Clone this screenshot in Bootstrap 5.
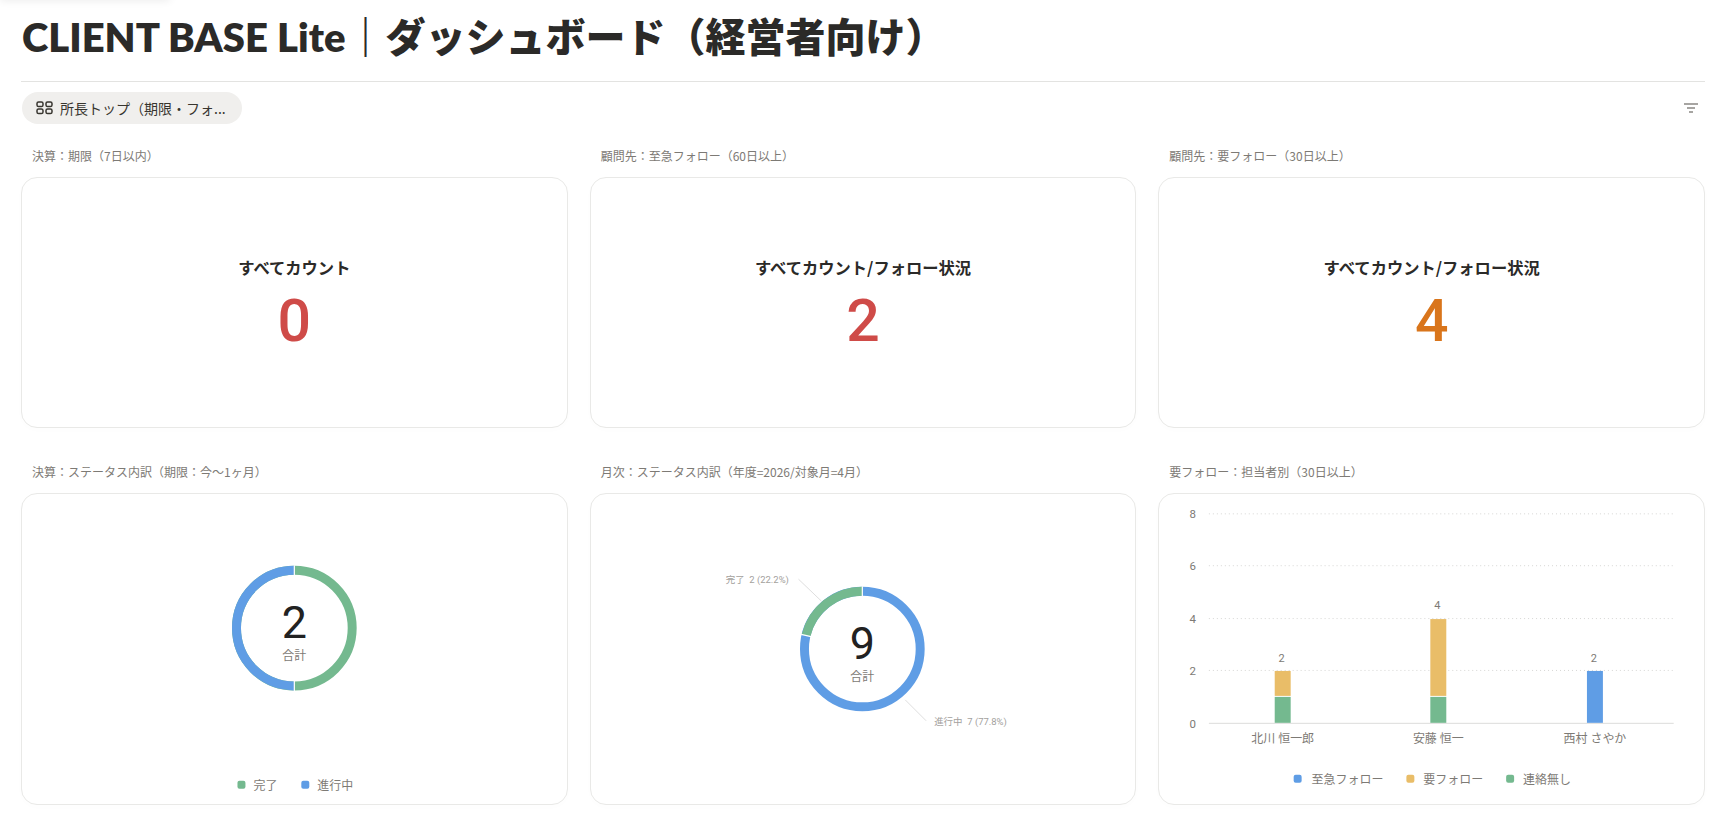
<!DOCTYPE html>
<html lang="ja">
<head>
<meta charset="utf-8">
<title>CLIENT BASE Lite</title>
<link href="https://cdn.jsdelivr.net/npm/bootstrap@5.3.0/dist/css/bootstrap.min.css" rel="stylesheet">
<style>
html,body{height:100%;overflow:hidden}
body{background:#fff;color:#2b2a28;font-family:"Noto Sans CJK JP","Noto Sans",sans-serif}
.page-wrap{padding:0 25px 0 21px;height:815px}
.page-title{font-family:"Lato","Noto Sans CJK JP",sans-serif;font-size:40px;font-weight:800;line-height:1;margin:0;padding:17px 0 0 1px;color:#2b2a28;border-bottom:1px solid #e3e3e1;height:82px}
.view-bar{height:58px;padding:10px 0 0}
.view-pill{height:32px;width:220px;margin-left:1px;padding:0 12px 0 14px;background:#f0efed;border-radius:16px;font-size:14px;color:#37352f;gap:7px}
.sort-icon{margin:11px 7px 0 0}
.sec-label{font-size:12px;color:#7d7a75;padding-left:11px;height:29px;line-height:16px;margin-top:8px}
.grid-row{--bs-gutter-x:22px;--bs-gutter-y:0;margin-left:0;margin-right:0}
.grid-cell{padding:0;width:calc((100% - 44px)/3);flex:0 0 auto}
.tile{border:1px solid #e9e9e7;border-radius:16px;background:#fff;box-shadow:0 2px 8px rgba(0,0,0,.012);height:251px}
.tile-metric{padding-top:3px}
.tile-tall{height:312px}
.tile-name{font-size:16.300px;font-weight:700;color:#2b2a28;line-height:24px}
.tile-num{font-family:"Roboto",sans-serif;font-size:59px;font-weight:500;line-height:64px;margin-top:10px}
.c-red{color:#cf4b48}
.c-org{color:#d9751b}
.chart-svg{display:block;width:100%;height:100%}
.chart-svg text{font-family:"Roboto","Noto Sans CJK JP",sans-serif}
.row-gap{margin-top:28px}
.top-fade{position:absolute;left:0;top:-6px;width:170px;height:6px;box-shadow:0 0 8px rgba(0,0,0,.1)}
</style>
</head>
<body>
<div class="top-fade"></div>
<div class="page-wrap">
  <h1 class="page-title">CLIENT BASE Lite｜ダッシュボード（経営者向け）</h1>
  <div class="view-bar d-flex justify-content-between align-items-start">
    <div class="view-pill d-flex align-items-center">
      <svg width="17" height="14" viewBox="0 0 17 14" fill="none" stroke="#37352f" stroke-width="1.5"><rect x="1" y="1" width="6" height="4.500" rx="1.600"/><rect x="10" y="1" width="6" height="4.500" rx="1.600"/><rect x="1" y="8" width="6" height="4.500" rx="1.600"/><rect x="10" y="8" width="6" height="4.500" rx="1.600"/></svg>
      <span class="text-nowrap">所長トップ（期限・フォ...</span>
    </div>
    <svg class="sort-icon" width="14" height="10" viewBox="0 0 14 10" stroke="#8a8884" stroke-width="1.300"><path d="M0 1h14M3 5h8M5 9h4"/></svg>
  </div>

  <div class="row grid-row flex-nowrap justify-content-between">
    <div class="grid-cell">
      <div class="sec-label">決算：期限（7日以内）</div>
      <div class="card tile tile-metric d-flex flex-column align-items-center justify-content-center text-center">
        <div class="tile-name">すべてカウント</div>
        <div class="tile-num c-red">0</div>
      </div>
    </div>
    <div class="grid-cell">
      <div class="sec-label">顧問先：至急フォロー（60日以上）</div>
      <div class="card tile tile-metric d-flex flex-column align-items-center justify-content-center text-center">
        <div class="tile-name">すべてカウント/フォロー状況</div>
        <div class="tile-num c-red">2</div>
      </div>
    </div>
    <div class="grid-cell">
      <div class="sec-label">顧問先：要フォロー（30日以上）</div>
      <div class="card tile tile-metric d-flex flex-column align-items-center justify-content-center text-center">
        <div class="tile-name">すべてカウント/フォロー状況</div>
        <div class="tile-num c-org">4</div>
      </div>
    </div>
  </div>

  <div class="row grid-row row-gap flex-nowrap justify-content-between">
    <div class="grid-cell">
      <div class="sec-label">決算：ステータス内訳（期限：今〜1ヶ月）</div>
      <div class="card tile tile-tall">
        <svg class="chart-svg" viewBox="0 0 546 310">
          <circle cx="273" cy="134" r="58" fill="none" stroke="#74b98f" stroke-width="9"/>
          <path d="M273 76a58 58 0 0 0 0 116" fill="none" stroke="#5f9de5" stroke-width="9"/>
          <path d="M273 71v10M273 187v10" stroke="#fff" stroke-width="1.200"/>
          <text x="273" y="144" text-anchor="middle" font-size="45" fill="#222">2</text>
          <text x="273" y="166" text-anchor="middle" font-size="12" fill="#7d7a75">合計</text>
          <rect x="216" y="287" width="8" height="8" rx="2" fill="#74b98f"/>
          <text x="232" y="296" font-size="12" fill="#7d7a75">完了</text>
          <rect x="280" y="287" width="8" height="8" rx="2" fill="#5f9de5"/>
          <text x="296" y="296" font-size="12" fill="#7d7a75">進行中</text>
        </svg>
      </div>
    </div>
    <div class="grid-cell">
      <div class="sec-label">月次：ステータス内訳（年度=2026/対象月=4月）</div>
      <div class="card tile tile-tall">
        <svg class="chart-svg" viewBox="0 0 546 310">
          <path d="M208 85l23 22M315 206l21 21" stroke="#dedede" stroke-width="1" fill="none"/>
          <circle cx="272" cy="155" r="58" fill="none" stroke="#5f9de5" stroke-width="9"/>
          <path d="M272 97A58 58 0 0 0 215.600 141.400" fill="none" stroke="#74b98f" stroke-width="9"/>
          <path d="M272 92v10M210.600 140.300l10 2.300" stroke="#fff" stroke-width="1.200"/>
          <text x="272" y="165" text-anchor="middle" font-size="45" fill="#222">9</text>
          <text x="272" y="187" text-anchor="middle" font-size="12" fill="#7d7a75">合計</text>
          <text x="135" y="89" font-size="9.500" fill="#a3a19d">完了&#160;&#160;2 (22.2%)</text>
          <text x="344" y="231" font-size="9.500" fill="#a3a19d">進行中&#160;&#160;7 (77.8%)</text>
        </svg>
      </div>
    </div>
    <div class="grid-cell">
      <div class="sec-label">要フォロー：担当者別（30日以上）</div>
      <div class="card tile tile-tall">
        <svg class="chart-svg" viewBox="0 0 546 310">
          <g stroke="#d6d6d4" stroke-dasharray="1 3"><path d="M50 19.500H516M50 71.500H516M50 124.500H516M50 176.500H516"/></g>
          <path d="M50 229.500H516" stroke="#dcdcda"/>
          <g font-size="11.500" fill="#7d7a75" text-anchor="end">
            <text x="37" y="24">8</text><text x="37" y="76">6</text><text x="37" y="129">4</text><text x="37" y="181">2</text><text x="37" y="234">0</text>
          </g>
          <rect x="116" y="203" width="16" height="26" fill="#74b98f"/>
          <rect x="116" y="177" width="16" height="25" fill="#e9bd68"/>
          <rect x="272" y="203" width="16" height="26" fill="#74b98f"/>
          <rect x="272" y="125" width="16" height="77" fill="#e9bd68"/>
          <rect x="429" y="177" width="16" height="52" fill="#5f9de5"/>
          <g font-size="11" fill="#7d7a75" text-anchor="middle">
            <text x="123" y="168">2</text><text x="279" y="115">4</text><text x="436" y="168">2</text>
          </g>
          <g font-size="12" fill="#7d7a75" text-anchor="middle">
            <text x="124" y="249">北川 恒一郎</text><text x="280" y="249">安藤 恒一</text><text x="437" y="249">西村 さやか</text>
          </g>
          <rect x="135" y="281" width="8" height="8" rx="2" fill="#5f9de5"/>
          <text x="153" y="290" font-size="12" fill="#7d7a75">至急フォロー</text>
          <rect x="248" y="281" width="8" height="8" rx="2" fill="#e9bd68"/>
          <text x="265" y="290" font-size="12" fill="#7d7a75">要フォロー</text>
          <rect x="348" y="281" width="8" height="8" rx="2" fill="#74b98f"/>
          <text x="365" y="290" font-size="12" fill="#7d7a75">連絡無し</text>
        </svg>
      </div>
    </div>
  </div>
</div>
<script src="https://cdn.jsdelivr.net/npm/bootstrap@5.3.0/dist/js/bootstrap.bundle.min.js"></script>
</body>
</html>
